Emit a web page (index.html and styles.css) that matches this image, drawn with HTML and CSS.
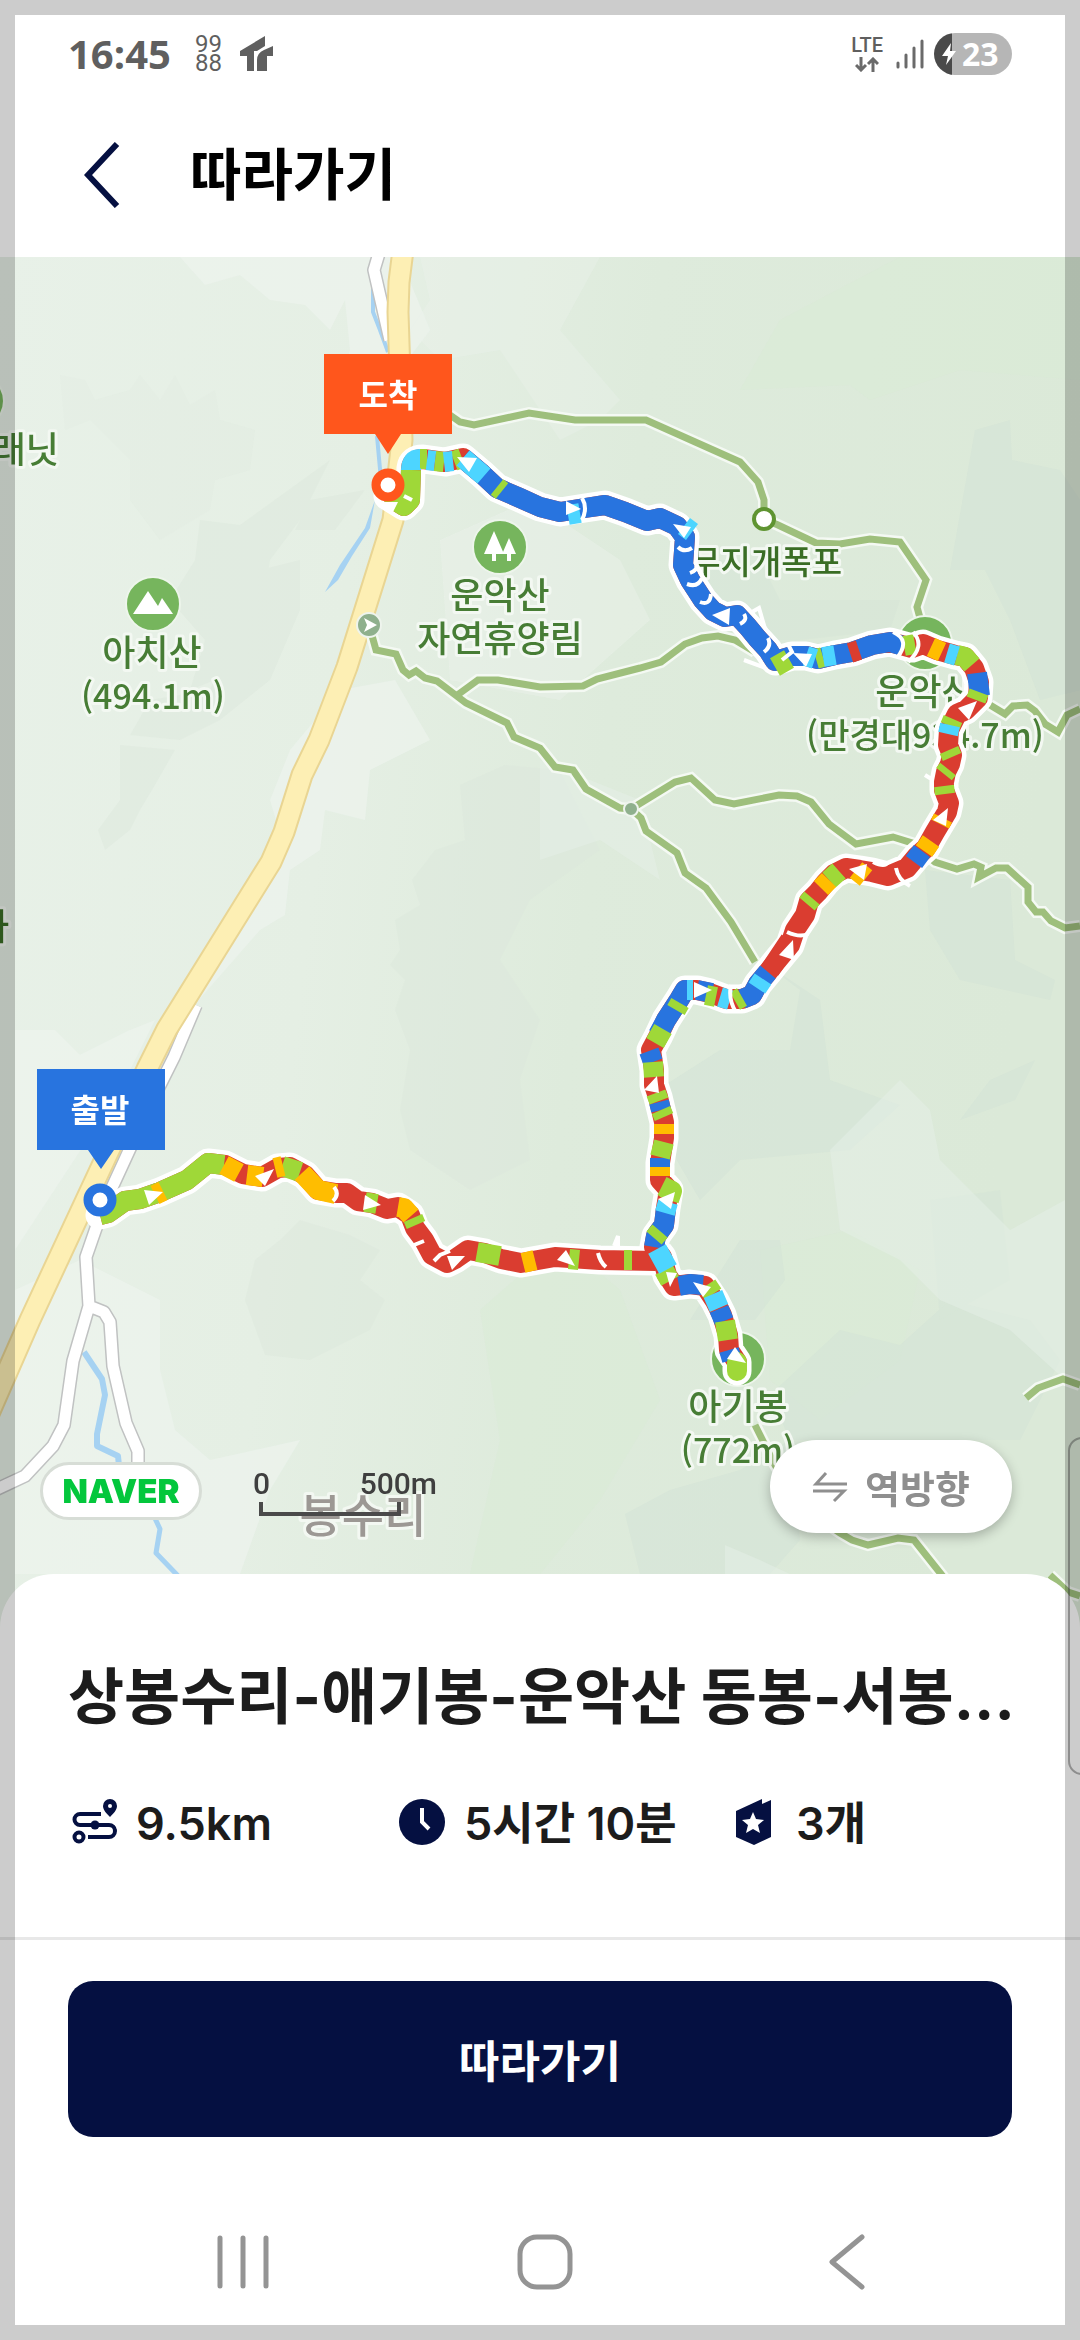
FILE: index.html
```html
<!DOCTYPE html>
<html lang="ko">
<head>
<meta charset="utf-8">
<meta name="viewport" content="width=device-width, initial-scale=1">
<title>따라가기</title>
<link rel="stylesheet" href="styles.css">
</head>
<body>
<div class="app">
  <div class="status">
    <span class="status-time">16:45</span>
    <span class="status-digits"><span>99</span><span>88</span></span>
    <svg class="status-logo" width="34" height="36" viewBox="0 0 34 36" aria-hidden="true"><path d="M0 15 25 0V10L17 15H14V35H7V20H0ZM24 14 33 10V20H27V35H17V24Q17 17 24 14Z"/></svg>
    <span class="status-net">
      <span class="status-lte">LTE</span>
      <svg width="24" height="15" viewBox="0 0 24 15" aria-hidden="true"><path d="M6 0V13M1 8 6 13 11 8M18 15V2M13 7 18 2 23 7"/></svg>
    </span>
    <svg class="status-signal" width="28" height="30" viewBox="0 0 28 30" aria-hidden="true"><path d="M2 24V28M10 16V28M18 9V28M26 2V28"/></svg>
    <span class="battery"><svg width="14" height="22" viewBox="0 0 14 22" aria-hidden="true"><path d="M9 0 0 13H6L4 22 14 8H8Z"/></svg>23</span>
  </div>

  <header class="topbar">
    <button class="back" type="button" aria-label="뒤로"><svg width="36" height="66" viewBox="0 0 36 66"><path d="M33 2 4 33 33 64"/></svg></button>
    <h1>따라가기</h1>
  </header>

  <section class="map" aria-label="지도">
    <svg class="map-canvas" viewBox="0 257 1080 1371" preserveAspectRatio="xMidYMin slice">
      <defs>
        <linearGradient id="land" x1="0" x2="1" y1="0" y2=".15">
          <stop offset="0" stop-color="#e8f1e8"/><stop offset=".35" stop-color="#e5efe4"/>
          <stop offset=".6" stop-color="#deebdc"/><stop offset="1" stop-color="#dbe9d8"/>
        </linearGradient>
        <g id="trails">
          <path d="M450 415 460 422 474 425 529 413 575 420H646L740 462 758 482 764 500V519L778 525 816 543 840 544 870 539 900 542 926 580 917 607 920 618"/>
          <path d="M371 632 376 650 396 654 403 670 409 675 416 671 425 678 437 681 466 703 507 723 514 737 540 748 555 767 573 770 586 789 620 808 631 809 641 818 646 831 677 853 685 873 706 888 731 922 755 962"/>
          <path d="M631 809 675 782 691 778 715 800 734 804 779 795 797 796 811 802 829 824 856 844 893 837 912 843 935 862 957 869 974 864 981 867 979 877 996 868H1007L1028 887V902L1036 912H1043L1051 921 1065 928 1080 926"/>
          <path d="M456 696 478 680H498L540 687 583 686 597 679 640 668 661 662 685 644 702 638 718 636 735 640 755 652"/>
          <path d="M990 705 1005 714 1013 706 1027 705 1035 711 1045 724 1058 732 1067 715 1080 709"/>
          <path d="M1026 1398 1038 1388 1063 1379 1080 1385M755 1425 775 1465 800 1505 840 1533 852 1540 868 1545 898 1538 914 1540 945 1579M1050 1575 1068 1592 1080 1596"/>
        </g>
        <path id="roads" d="M380 250 374 270 390 340M196 1005 174 1057 150 1105 104 1205 86 1257 89 1306 73 1361 64 1425 53 1446 25 1476-5 1490M89 1306 104 1312 110 1322 113 1366 126 1423 138 1451V1476"/>
        <path id="main-road" d="M403 250 399 282 398 312 402 440 393 520 347 667 319 740 302 775 284 832 271 862 167 1029 147 1069 30 1320-20 1434"/>
        <path id="route-east" d="M388 496 404 506 410 500 411 468Q412 459 423 459L445 462 463 458 482 474 497 488 520 498 540 507 560 512 585 508 605 505 625 512 647 521 660 518 677 526 685 537 683 565 690 580 703 600 713 611 725 617 737 615 748 627 757 638 768 650 775 661 792 656 806 656 818 659 835 655 852 652 872 645 890 642 912 648 923 644 937 650 955 655 965 657 974 668 979 682 978 698 966 710 957 714 949 730 948 745 952 755 950 764 946 772 944 782 944 790 949 803 947 812 941 822 935 832 926 848 917 856 907 868 888 876 872 872 860 870 846 868 834 874 826 882 818 892 809 901 805 915 795 930 790 945 776 962 768 972 758 984 752 995 742 999 726 999 710 993 697 990 685 990 679 1000 666 1020 658 1037 651 1050 654 1070 654 1085 658 1097 664 1122 664 1138 660 1163 660 1180 669 1190 666 1208 664 1225 656 1236 654 1247 662 1257 667 1275 674 1286 690 1284 705 1286 715 1301 722 1315 728 1335 729 1350 737 1362 737 1371"/>
        <path id="route-west" d="M656 1261 600 1260 555 1257 521 1263 501 1259 485 1253 468 1250 455 1259 447 1263 432 1255 424 1240 415 1228 410 1215 398 1207 387 1209 372 1203 358 1201 347 1193 336 1193 318 1190 305 1175 290 1167 278 1168 262 1177 243 1174 225 1165 208 1163 187 1180 160 1192 140 1199 125 1201 108 1213 100 1215"/>
      </defs>
      <rect y="257" width="1080" height="1371" fill="url(#land)"/>
      <g class="relief-light">
        <path d="M180 257 205 285 240 275 270 300 305 305 330 330 345 300 350 350 340 380 400 370 430 330 400 257Z"/>
        <path d="M420 257 430 300 410 330 440 360 500 350 560 440 600 420 620 400 560 330 600 257Z" opacity=".5"/>
        <path d="M290 750 270 800 282 840 262 870 240 920 200 990 190 1010 260 930 285 915 290 870 320 850 325 810 365 820 370 770 430 740 395 680 340 690Z"/>
        <path d="M15 1030 55 1030 80 1055 130 1030 155 1020 120 1090 15 1250Z"/>
        <path d="M15 1290 80 1260 160 1300 160 1370 175 1430 210 1460 300 1440 270 1490 240 1574 15 1574Z"/>
        <path d="M440 540 530 500 620 560 650 620 560 700 450 680Z" opacity=".6"/>
      </g>
      <g class="relief-dark">
        <path d="M60 375 85 380 95 400 130 390 140 375 160 400 175 375 190 405 215 390 220 420 255 430 250 470 215 480 210 510 160 540 130 500 130 460 90 420 65 430Z" opacity=".4"/>
        <path d="M200 520 240 525 330 460 300 520 270 560 260 620 215 680 190 690 205 640 170 600 195 560Z"/>
        <path d="M260 570 300 560 300 610 270 680 220 720 180 740 130 735 150 700 210 690 240 620Z"/>
        <path d="M310 500 365 490 335 530 295 530Z"/>
        <path d="M120 745 175 750 155 785 140 810 130 830 105 850 98 830 120 800Z"/>
        <path d="M560 770 505 765 460 785 465 840 435 850 412 880 420 905 395 920 400 950 390 965 405 980 395 1010 410 1050 400 1110 410 1150 470 1190 530 1160 520 1080 540 1020 500 960 530 900 600 850Z"/>
        <path d="M245 1300 255 1260 280 1240 300 1220 350 1235 380 1250 360 1280 385 1300 370 1330 310 1360 265 1355Z"/>
      </g>
      <g class="relief-green">
        <path d="M740 390 850 385 870 400 960 370 1080 380 1080 257 900 257 780 320Z"/>
        <path d="M480 1310 560 1240 620 1290 660 1400 600 1500 540 1574 470 1574 500 1440Z"/>
        <path d="M760 1250 850 1230 920 1270 900 1360 820 1420 770 1380Z"/>
      </g>
      <g class="relief-cool">
        <path d="M975 430 1010 420 1012 460 1060 470 1080 500 1080 690 1040 700 1010 620 985 570 950 570Z"/>
        <path d="M690 560 760 560 780 600 900 600 890 630 800 640 740 640Z" opacity=".5"/>
        <path d="M925 870 1010 880 1015 960 1055 980 1050 1000 960 980 930 930Z"/>
        <path d="M665 1085 720 1050 790 1050 800 990 760 960 820 1000 830 1080 900 1105 850 1150 740 1160 700 1200 665 1140Z"/>
        <path d="M690 1320 740 1240 780 1240 785 1280 755 1320Z"/>
        <path d="M770 1395 840 1330 900 1345 950 1300 1030 1320 1060 1360 1020 1440 900 1440 790 1440Z"/>
        <path d="M625 1514 670 1490 740 1470 790 1440 800 1540 770 1574 640 1574Z"/>
        <path d="M990 1080 1035 1060 1015 1100 960 1120Z"/>
        <path d="M930 1200 1000 1190 1010 1280 940 1320Z" opacity=".7"/>
      </g>
      <g class="relief-pale">
        <path d="M830 1150 900 1080 930 1110 940 1160 1010 1230 1065 1200 1065 1380 1010 1330 940 1300 900 1260 840 1230Z"/>
        <path d="M725 1545 760 1560 790 1574 725 1574Z"/>
        <path d="M540 760 640 800 660 880 600 840 540 860Z"/>
      </g>

      <g class="water">
        <path d="M373 278V312L380 330 388 352M377 436 381 480" stroke-width="4"/>
        <path d="M375 500 370 528 352 556 338 580 325 592 340 565 365 528Z" class="water-fill"/>
        <path d="M84 1352 102 1379 105 1395 97 1434V1446L118 1456 120 1476" stroke-width="6"/>
        <path d="M152 1512 160 1529 156 1553 182 1580" stroke-width="5"/>
      </g>

      <use href="#roads" class="road-edge"/>
      <use href="#roads" class="road"/>
      <use href="#main-road" class="highway-edge"/>
      <use href="#main-road" class="highway"/>

      <use href="#trails" class="trail-edge"/>
      <use href="#trails" class="trail"/>
      <circle class="fall" cx="764" cy="519" r="10"/>
      <circle class="node" cx="631" cy="809" r="7"/>
      <circle class="node" cx="369" cy="625" r="12"/>
      <path d="M364 618 377 625 364 632 367 625Z" fill="#fff"/>

      <g class="poi">
        <circle cx="153" cy="604" r="27"/><circle cx="500" cy="547" r="27"/><circle cx="925" cy="643" r="27"/><circle cx="738" cy="1359" r="27"/><circle cx="-22" cy="401" r="26"/>
      </g>
      <path d="M133 614 148 591 158 606 162 598 173 614Z" fill="#fff"/>
      <path d="M494 531 504 554H496V561H492V554H484ZM509 538 516 554H511V561H507V554H504L503 552Z" fill="#fff"/>

      <g class="place">
        <text x="152" y="666">아치산</text><text x="153" y="709" class="height">(494.1m)</text>
        <text x="500" y="609">운악산</text><text x="500" y="652">자연휴양림</text>
        <text x="925" y="705">운악산</text><text x="925" y="748" class="height">(만경대934.7m)</text>
        <text x="738" y="1420">아기봉</text><text x="738" y="1463" class="height">(772m)</text>
        <text x="59" y="463" class="end">래닛</text>
        <text x="9" y="940" class="end deep">사</text>
        <text x="842" y="574" class="end deep small">무지개폭포</text>
        <text x="363" y="1532" class="village">봉수리</text>
      </g>

      <g class="route-halo">
        <use href="#route-east"/><use href="#route-west"/>
      </g>
      <path class="burr" d="M738 602 750 622M752 612 759 608 766 632M744 660 766 668M698 568 702 575M760 635 774 640M614 1246 618 1236V1250M925 775 933 780"/>
      <g class="seg red">
        <use href="#route-east"/><use href="#route-west"/>
      </g>
      <g class="seg blue">
        <path d="M463 458 482 474 497 488 520 498 540 507 560 512 585 508 605 505 625 512 647 521 660 518 677 526 685 537 683 565 690 580 703 600 713 611 725 617 737 615 748 627 757 638 768 650 775 661 792 656 806 656 818 659 835 655 852 652 872 645 890 642 903 646M742 999 752 995 758 984 768 972M691 990 685 990 679 1000 666 1020 658 1035M666 1208 664 1225 656 1236 654 1247"/>
      </g>
      <g class="seg red">
        <path d="M850 653 859 650M770 970 790 940"/>
      </g>
      <g class="seg blue">
        <path d="M977 673 980 696M922 851 914 862M712 993 697 990M649 1051 653 1062M659 1102 661 1110M660 1158 660 1167M679 1286 690 1284 703 1285M719 1309 724 1321M729 1350 732 1360"/>
      </g>
      <g class="seg green">
        <path d="M388 496 404 506 410 500 411 470M419 459H427M435 461 444 462M454 461 462 458M497 487 502 491M775 667 789 659M816 659 823 657M904 646 915 644M957 655 965 657 972 665M979 692 976 700M953 719 950 726M949 750 952 757M948 769 944 774M944 786 945 794M839 871 829 880M812 898 807 904M742 997 735 1001M716 997 706 995M680 1003 676 1010M663 1029 655 1043M653 1062 654 1077M656 1093 659 1101M661 1110 664 1117M664 1142 660 1157M662 1186 672 1191 669 1200M660 1231 654 1238M664 1270 670 1281M707 1285 713 1294M725 1321 728 1340M624 1260H632M569 1259 579 1260M500 1256 477 1252M416 1225 413 1218M377 1204 365 1202M300 1172 282 1166M224 1165 208 1163 187 1180 160 1192 140 1199 125 1201 108 1213 100 1215"/>
        <path d="M737 1362V1371" stroke-linecap="round"/>
      </g>
      <g class="seg cyan">
        <path d="M411 470Q411 459 420 459M427 460 435 461M444 462 453 461M463 458 484 476M568 515 580 513M684 526 692 532M806 656 815 659M823 657 835 655M947 653 957 656M950 725 948 734M763 979 757 988M730 1000 720 997M693 990 687 990M668 1202 665 1213M657 1249 668 1269M713 1294 719 1308"/>
      </g>
      <g class="seg yellow">
        <path d="M931 647 942 652M943 818 940 824M931 841 924 851M866 878 856 870M829 880 821 888M664 1124V1134M660 1167V1176M535 1260 523 1263M411 1216 404 1208 398 1207M336 1194 318 1190 302 1173M283 1166 275 1168M263 1177 247 1175M239 1173 224 1165M163 1191 155 1195"/>
      </g>
      <path class="cuts" d="M582 498Q588 508 582 520M678 547Q684 553 692 548M690 573Q698 570 696 565M687 584Q698 588 702 578M700 602Q710 606 711 594M740 624Q748 620 744 614M764 652Q772 646 768 638M788 644 792 652 782 660M893 632Q911 640 897 658M913 632Q926 646 908 662M873 862Q885 868 888 862M896 868Q898 880 910 886M787 932Q800 938 808 934M731 985Q728 1000 736 1012M333 1201Q340 1194 334 1187M414 1245 424 1241M434 1261 440 1255 450 1251M598 1253Q600 1262 606 1267M404 496 412 500"/>
      <path class="arrows" d="M457 457 477 458 469 472ZM566 501 581 509 566 515ZM673 524 691 527 684 538ZM712 615 730 608 729 625ZM793 653 812 654 806 667ZM958 708 977 701 969 720ZM933 820 948 808 946 826ZM849 869 867 864 864 880ZM779 955 793 940 794 960ZM694 982 712 990 694 998ZM644 1090 657 1076 659 1093ZM658 1199 675 1192 671 1209ZM666 1272 677 1273 670 1287ZM693 1282 711 1287 703 1297ZM727 1359 735 1347 746 1363ZM557 1260 566 1250 575 1266ZM144 1190 163 1192 149 1205ZM255 1176 274 1169 265 1186ZM365 1195 381 1205 363 1210ZM447 1256 465 1256 452 1270ZM377 502 398 502 393 512Z"/>

      <g class="pin finish">
        <path d="M324 354H452V434H401L388 454 375 434H324Z"/><circle cx="388" cy="485" r="12"/><text x="388" y="407">도착</text>
      </g>
      <g class="pin start">
        <path d="M37 1069H165V1150H114L101 1169 88 1150H37Z"/><circle cx="100" cy="1200" r="12"/><text x="100" y="1122">출발</text>
      </g>
    </svg>

    <div class="map-tools">
      <div class="map-info">
        <a class="naver" href="#naver">NAVER</a>
        <div class="scale">
          <div class="scale-text"><span>0</span><span>500m</span></div>
          <div class="scale-bar"></div>
        </div>
      </div>
      <button class="reverse" type="button">
        <svg width="36" height="34" viewBox="0 0 36 34" aria-hidden="true"><path d="M35 14H4L14 3M1 21H32L22 31"/></svg>역방향
      </button>
    </div>
  </section>

  <section class="sheet">
    <h2>상봉수리-애기봉-운악산 동봉-서봉...</h2>
    <ul class="stats">
      <li><svg width="52" height="52" viewBox="0 0 52 52" aria-hidden="true"><g fill="none" stroke="#051041" stroke-width="4"><path d="M33 18H12A5.500 5.500 0 0 0 12 29H41A5.500 5.500 0 0 1 41 41H20"/><circle cx="11" cy="41" r="4.500"/></g><circle cx="27" cy="29" r="4.500" fill="#051041"/><path fill="#051041" fill-rule="evenodd" d="M42 3A7 7 0 0 1 49 10C49 14 45 18 42 21 39 18 35 14 35 10A7 7 0 0 1 42 3ZM42 8A2 2 0 1 0 42 12 2 2 0 1 0 42 8Z"/></svg><span>9.5km</span></li>
      <li><svg width="52" height="52" viewBox="0 0 52 52" aria-hidden="true"><circle cx="26" cy="26" r="23" fill="#051041"/><path d="M26 12V26L33 33" fill="none" stroke="#fff" stroke-width="4"/></svg><span>5시간 10분</span></li>
      <li><svg width="52" height="52" viewBox="0 0 52 52" aria-hidden="true"><path fill="#051041" d="M8 15 34 3V8L43 4V41L26 49 8 41Z"/><path fill="#fff" d="M25 16 28 23 36 24 30 29 32 37 25 33 18 37 20 29 14 24 22 23Z"/></svg><span>3개</span></li>
    </ul>
  </section>

  <footer class="action">
    <button type="button">따라가기</button>
  </footer>

  <nav class="system">
    <button type="button" aria-label="최근 앱"><svg width="56" height="56" viewBox="0 0 56 56"><path d="M5 4V52M28 4V52M51 4V52"/></svg></button>
    <button type="button" aria-label="홈"><svg width="56" height="56" viewBox="0 0 56 56"><rect x="3" y="3" width="50" height="50" rx="17"/></svg></button>
    <button type="button" aria-label="이전"><svg width="56" height="56" viewBox="0 0 56 56"><path d="M43 3 13 28 43 53"/></svg></button>
  </nav>
  <div class="edge-handle"></div>
  <div class="frame"></div>
</div>
</body>
</html>
```
FILE: styles.css
```css
* { box-sizing: border-box; }

body {
  margin: 0;
  background: #fff;
  color: #1c1c1c;
  font-family: Inter, "Noto Sans CJK KR", sans-serif;
}

button { border: 0; padding: 0; background: none; font: inherit; color: inherit; cursor: pointer; }
h1, h2 { margin: 0; }
svg { display: block; flex: none; }

.app {
  position: relative;
  display: flex;
  flex-direction: column;
  min-height: 100vh;
  overflow: hidden;
}

.status {
  display: flex;
  align-items: center;
  height: 92px;
  padding: 16px 68px 0;
  color: #5f5f5f;
}
.status-time { font: 700 40px/40px "Open Sans", sans-serif; }
.status-digits { display: flex; flex-direction: column; margin: 0 18px 0 24px; font: 400 24px/19px Roboto, sans-serif; }
.status-logo { fill: #5f5f5f; }
.status-net { display: flex; flex-direction: column; align-items: center; gap: 3px; margin-left: auto; }
.status-lte { font: 500 20px/18px Roboto, sans-serif; }
.status-net svg, .status-signal { fill: none; stroke: #6a6a6a; stroke-width: 3; }
.status-signal { margin: 0 10px 0 13px; stroke-linecap: round; }
.battery {
  display: flex;
  align-items: center;
  gap: 6px;
  width: 78px;
  height: 42px;
  padding-left: 8px;
  border-radius: 21px;
  background: linear-gradient(to right, #4a4a4a 18px, #b6b6b6 18px);
  color: #fff;
  font: 700 32px/42px "Open Sans", sans-serif;
}
.battery svg { fill: #fff; }

.topbar {
  display: flex;
  align-items: center;
  gap: 70px;
  height: 165px;
  padding: 0 84px;
  color: #000;
}
.back svg { fill: none; stroke: #051041; stroke-width: 6; }
.topbar h1 { font-size: 56px; line-height: 66px; font-weight: 700; }

.map { position: relative; flex: 1 0 1371px; overflow: hidden; }
.map-canvas { position: absolute; inset: 0; width: 100%; height: 100%; }
.map-tools {
  position: absolute;
  left: 0;
  right: 0;
  bottom: 95px;
  display: flex;
  align-items: center;
  padding: 0 68px 0 40px;
}
.map-info { display: flex; align-items: center; padding-top: 8px; }

.relief-light { fill: #eef4ef; opacity: .65; }
.relief-dark { fill: #dce7dc; opacity: .45; }
.relief-green { fill: #daebd5; opacity: .5; }
.relief-cool { fill: #d2e2d6; opacity: .5; }
.relief-pale { fill: #e6efe7; opacity: .5; }

.water { fill: none; stroke: #a6d2f2; stroke-linejoin: round; }
.water-fill { fill: #a6d2f2; stroke: none; }
.road-edge, .road, .highway-edge, .highway { fill: none; stroke-linejoin: round; }
.road-edge { stroke: #c0c2c2; stroke-width: 14; }
.road { stroke: #fff; stroke-width: 11; }
.highway-edge { stroke: #e9d593; stroke-width: 23; }
.highway { stroke: #fdefb4; stroke-width: 19; }
.trail-edge, .trail { fill: none; }
.trail-edge { stroke: #f4f9f3; stroke-width: 12; }
.trail { stroke: #9ebf7c; stroke-width: 7; }
.fall { fill: #fff; stroke: #5f9431; stroke-width: 4; }
.node { fill: #8fb08d; stroke: #eef4ed; stroke-width: 2; }
.poi { fill: #76b55d; stroke: #edf5eb; stroke-width: 2; }

.place {
  fill: #477d35;
  stroke: #f3f8f2;
  stroke-width: 6;
  stroke-linejoin: round;
  paint-order: stroke;
  text-anchor: middle;
  font: 500 36px "Noto Sans CJK KR", sans-serif;
}
.place .height { font-size: 34px; }
.place .end { text-anchor: end; }
.place .deep { fill: #3a6d25; }
.place .small { font-size: 33px; }
.place .village { fill: #9c9894; font-size: 46px; }

.route-halo { fill: none; stroke: #fff; stroke-width: 29; stroke-linejoin: round; stroke-linecap: round; }
.burr { fill: none; stroke: #fff; stroke-width: 4; }
.cuts { fill: none; stroke: #fff; stroke-width: 4; }
.arrows { fill: #fff; }
.seg { fill: none; stroke-width: 20; stroke-linejoin: round; }
.red { stroke: #da3d30; }
.blue { stroke: #2874df; }
.green { stroke: #9fd838; }
.cyan { stroke: #4dd5ff; }
.yellow { stroke: #ffbd00; }

.pin circle { fill: #fff; stroke-width: 9; }
.pin text { fill: #fff; text-anchor: middle; font: 700 32px "Noto Sans CJK KR", sans-serif; }
.finish { fill: #ff561c; }
.finish circle { stroke: #ff561c; }
.start { fill: #2874df; }
.start circle { stroke: #2874df; }

.naver {
  width: 162px;
  height: 58px;
  border: 3px solid #d7ddd6;
  border-radius: 29px;
  background: #fff;
  color: #03c73c;
  font-size: 33px;
  line-height: 52px;
  font-weight: 900;
  text-align: center;
  text-decoration: none;
}
.scale { width: 184px; margin-left: 51px; color: #3f3f3f; font: 500 30px/36px Roboto, sans-serif; }
.scale-text { display: flex; justify-content: space-between; }
.scale-bar { width: 142px; height: 14px; margin-left: 6px; border: 4px solid #4a4a4a; border-top: 0; }
.reverse {
  display: flex;
  align-items: center;
  justify-content: center;
  gap: 17px;
  width: 242px;
  height: 93px;
  margin-left: auto;
  border-radius: 47px;
  background: #fff;
  box-shadow: 0 4px 12px rgba(0, 0, 0, .25);
  color: #8f8f8f;
  font-size: 38px;
  font-weight: 700;
}
.reverse svg { fill: none; stroke: #8f8f8f; stroke-width: 3; }

.sheet {
  position: relative;
  margin-top: -54px;
  padding: 78px 68px 81px;
  border-bottom: 3px solid #e8e8e8;
  border-radius: 54px 54px 0 0;
  background: #fff;
}
.sheet h2 { font-size: 61px; line-height: 90px; font-weight: 700; white-space: nowrap; }
.stats {
  display: grid;
  grid-template-columns: 328px 332px 1fr;
  margin: 46px 0 0;
  padding: 0;
  list-style: none;
}
.stats li {
  display: flex;
  align-items: center;
  gap: 16px;
  font-size: 45px;
  line-height: 64px;
  font-weight: 600;
  white-space: nowrap;
}
.stats span { padding-top: 4px; }

.action { padding: 41px 68px 47px; }
.action button {
  display: block;
  width: 100%;
  height: 156px;
  border-radius: 25px;
  background: #051041;
  color: #fff;
  font-size: 44px;
  font-weight: 700;
}

.system { display: flex; height: 156px; padding: 0 82px 0 92px; }
.system button { display: flex; flex: 1; align-items: center; justify-content: center; }
.system svg { fill: none; stroke: #949494; stroke-width: 5; stroke-linecap: round; stroke-linejoin: round; }

.frame {
  position: absolute;
  inset: 0;
  border: 15px solid rgba(0, 0, 0, .2);
  pointer-events: none;
}
.edge-handle {
  position: absolute;
  right: -20px;
  bottom: 565px;
  width: 32px;
  height: 338px;
  border: 2px solid rgba(60, 60, 60, .4);
  border-radius: 14px;
  pointer-events: none;
}
```
